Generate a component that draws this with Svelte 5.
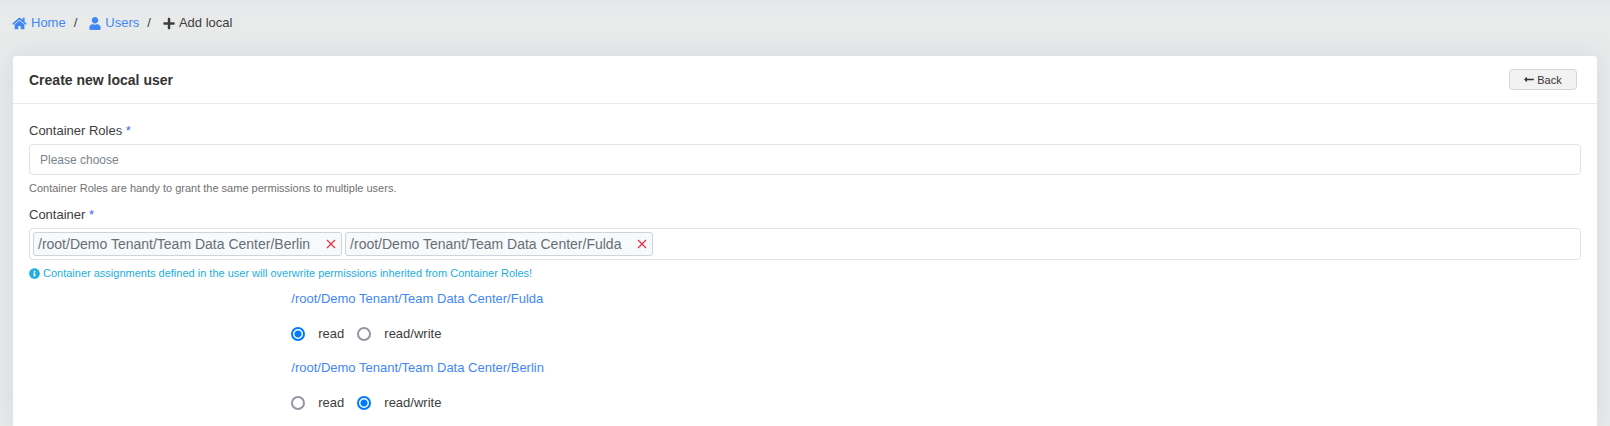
<script>
  const tags = ['/root/Demo Tenant/Team Data Center/Berlin', '/root/Demo Tenant/Team Data Center/Fulda'];
  let selected = $state(tags);
  let permissions = $state([
    { path: '/root/Demo Tenant/Team Data Center/Fulda', value: 'read' },
    { path: '/root/Demo Tenant/Team Data Center/Berlin', value: 'read/write' }
  ]);
  const remove = (tag) => (selected = selected.filter((t) => t !== tag));
</script>

<div class="page">
  <nav class="breadcrumb">
    <a href="#home">
      <svg class="home" viewBox="0 0 576 512"><path d="M280.37 148.26L96 300.11V464a16 16 0 0 0 16 16l112.06-.29a16 16 0 0 0 15.92-16V368a16 16 0 0 1 16-16h64a16 16 0 0 1 16 16v95.64a16 16 0 0 0 16 16.05L464 480a16 16 0 0 0 16-16V300L295.67 148.26a12.19 12.19 0 0 0-15.3 0zM571.6 251.47L488 182.56V44.05a12 12 0 0 0-12-12h-56a12 12 0 0 0-12 12v72.61L318.47 43a48 48 0 0 0-61 0L4.34 251.47a12 12 0 0 0-1.6 16.9l25.5 31A12 12 0 0 0 45.15 301l235.22-193.74a12.19 12.19 0 0 1 15.3 0L530.9 301a12 12 0 0 0 16.9-1.6l25.5-31a12 12 0 0 0-1.7-16.93z"/></svg>
      Home</a>
    <span class="sep">/</span>
    <a href="#users">
      <svg class="user" viewBox="0 0 448 512"><path d="M224 256c70.7 0 128-57.3 128-128S294.7 0 224 0 96 57.3 96 128s57.3 128 128 128zm89.6 32h-16.7c-22.2 10.2-46.900 16-72.900 16s-50.600-5.800-72.900-16h-16.700C60.200 288 0 348.200 0 422.400V464c0 26.500 21.500 48 48 48h352c26.500 0 48-21.500 48-48v-41.600c0-74.200-60.200-134.400-134.400-134.400z"/></svg>
      Users</a>
    <span class="sep">/</span>
    <span class="current">
      <svg class="plus" viewBox="0 0 448 512"><path d="M416 208H272V64c0-17.670-14.330-32-32-32h-32c-17.670 0-32 14.330-32 32v144H32c-17.670 0-32 14.330-32 32v32c0 17.670 14.330 32 32 32h144v144c0 17.670 14.330 32 32 32h32c17.670 0 32-14.330 32-32V304h144c17.670 0 32-14.330 32-32v-32c0-17.670-14.330-32-32-32z"/></svg>
      Add local</span>
  </nav>

  <main class="card">
    <header>
      <h1>Create new local user</h1>
      <button class="back" type="button">
        <svg viewBox="0 0 448 512"><path d="M134.059 296H436c6.627 0 12-5.373 12-12v-56c0-6.627-5.373-12-12-12H134.059v-46.059c0-21.382-25.851-32.090-40.971-16.971L7.029 239.029c-9.373 9.373-9.373 24.569 0 33.941l86.059 86.059c15.119 15.119 40.971 4.411 40.971-16.971V296z"/></svg>
        Back
      </button>
    </header>

    <form>
      <label class="label" for="roles">Container Roles <b>*</b></label>
      <input class="box" id="roles" type="text" placeholder="Please choose" />
      <p class="help">Container Roles are handy to grant the same permissions to multiple users.</p>

      <label class="label" for="container">Container <b>*</b></label>
      <div class="box tags">
        {#each selected as tag}
          <span class="tag">{tag}
            <button type="button" aria-label="Remove {tag}" onclick={() => remove(tag)}>
              <svg viewBox="0 0 10 10"><path d="M1 1 9 9M9 1 1 9"/></svg>
            </button>
          </span>
        {/each}
        <input id="container" type="text" />
      </div>
      <p class="help info">
        <svg viewBox="0 0 512 512"><path d="M256 8C119.043 8 8 119.083 8 256c0 136.997 111.043 248 248 248s248-111.003 248-248C504 119.083 392.957 8 256 8zm0 110c23.196 0 42 18.804 42 42s-18.804 42-42 42-42-18.804-42-42 18.804-42 42-42zm56 254c0 6.627-5.373 12-12 12h-88c-6.627 0-12-5.373-12-12v-24c0-6.627 5.373-12 12-12h12v-64h-12c-6.627 0-12-5.373-12-12v-24c0-6.627 5.373-12 12-12h64c6.627 0 12 5.373 12 12v100h12c6.627 0 12 5.373 12 12v24z"/></svg>
        Container assignments defined in the user will overwrite permissions inherited from Container Roles!
      </p>

      <div class="permissions">
        {#each permissions as p, i}
          <fieldset>
            <legend><a href="#container">{p.path}</a></legend>
            <div class="options">
              {#each ['read', 'read/write'] as option}
                <label><input type="radio" name="permission-{i}" value={option} bind:group={p.value} />{option}</label>
              {/each}
            </div>
          </fieldset>
        {/each}
      </div>
    </form>
  </main>
</div>

<style>
  :global(body) { background: #e9ebeb; }
  .page {
    display: flex;
    flex-direction: column;
    min-height: 100vh;
    box-sizing: border-box;
    padding: 14px 13px 0 12px;
    overflow: hidden;
    background: linear-gradient(#e4e6e9, #e9ebeb 20px);
    font: 13px/18px "Liberation Sans", Arial, sans-serif;
    color: #3d3d3d;
  }
  a { color: #3f87f5; text-decoration: none; }
  svg { fill: currentColor; flex: none; }
  .breadcrumb, .breadcrumb a, .current { display: flex; align-items: center; }
  .breadcrumb a, .current { gap: 4px; }
  .breadcrumb { padding-bottom: 24px; }
  .sep { margin: 0 12px 0 8px; }
  .home { width: 15px; height: 13px; }
  .user, .plus { width: 12px; height: 13px; }
  .card {
    flex: 1;
    margin-left: 1px;
    background: #fff;
    border-radius: 3px 3px 0 0;
    box-shadow: 0 0 28px rgba(82, 104, 140, 0.14);
  }
  header {
    display: flex;
    align-items: center;
    justify-content: space-between;
    height: 47px;
    padding: 0 20px 0 16px;
    border-bottom: 1px solid #e9e9e9;
  }
  h1 { margin: 0; font-size: 14px; line-height: 20px; font-weight: 600; color: #333; }
  .back {
    display: flex;
    align-items: center;
    justify-content: center;
    gap: 3px;
    width: 68px;
    height: 21px;
    padding: 0;
    border: 1px solid #d5d5d5;
    border-radius: 4px;
    background: #f2f2f2;
    color: #333;
    font: 11px/14px "Liberation Sans", Arial, sans-serif;
  }
  .back svg { width: 10px; height: 11px; }
  form { padding: 18px 16px 0; }
  .label { display: block; line-height: 18px; margin-bottom: 4px; }
  .label b { color: #4a5df9; font-weight: 400; }
  .box {
    display: block;
    box-sizing: border-box;
    width: 100%;
    height: 31px;
    padding: 0 10px;
    border: 1px solid #e1e2e4;
    border-radius: 4px;
    background: #fff;
    font: 12px/16px "Liberation Sans", Arial, sans-serif;
    outline: none;
  }
  .box::placeholder { color: #7b848c; opacity: 1; }
  .help { margin: 5px 0 10px; font-size: 11px; line-height: 16px; color: #707070; }
  .tags { display: flex; align-items: center; gap: 3px; height: 32px; padding: 0 3px; }
  .tags input { flex: 1; min-width: 0; border: 0; outline: 0; background: none; }
  .tag {
    display: flex;
    align-items: center;
    gap: 15px;
    box-sizing: border-box;
    height: 24px;
    padding: 0 4px;
    border: 1px solid #ced4da;
    border-radius: 3px;
    background: #f8f9fb;
    color: #666f77;
    font-size: 14px;
    line-height: 22px;
    white-space: nowrap;
  }
  .tag button { display: flex; padding: 0 1px; border: 0; background: none; color: #dc3545; }
  .tag svg { width: 10px; height: 10px; stroke: currentColor; stroke-width: 1.3; }
  .info { display: flex; align-items: center; gap: 3px; margin-bottom: 9px; color: #22aedf; }
  .info svg { width: 11px; height: 11px; }
  .permissions { margin-left: 16.9%; }
  fieldset { margin: 0; padding: 0; border: 0; }
  fieldset + fieldset { margin-top: 16px; }
  legend { padding: 0; line-height: 18px; }
  .options { display: flex; gap: 13px; padding-top: 17px; }
  .options label { display: flex; align-items: center; gap: 13px; height: 18px; }
  .options input {
    appearance: none;
    box-sizing: border-box;
    width: 14px;
    height: 14px;
    margin: 0;
    border: 2px solid #9494a3;
    border-radius: 50%;
    background: #fff;
  }
  .options input:checked {
    border-color: #007aff;
    background: radial-gradient(circle, #007aff 3px, #fff 4px);
  }
</style>
